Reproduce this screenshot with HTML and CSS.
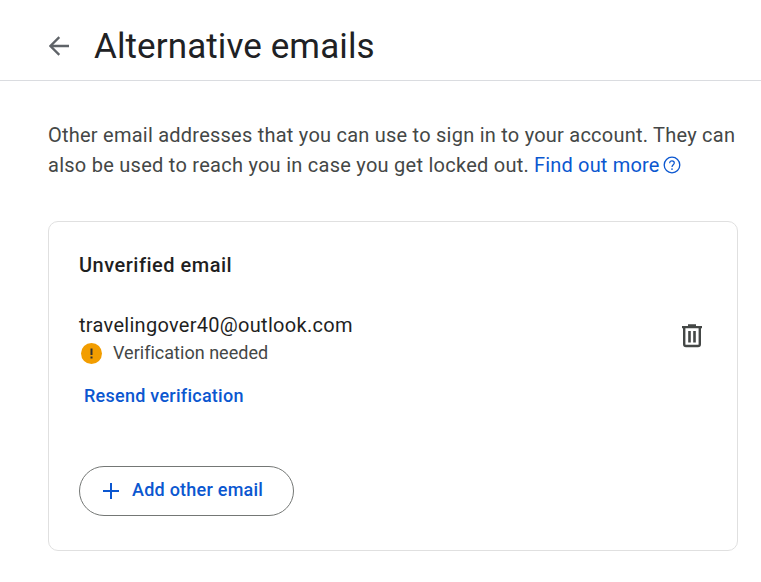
FILE: index.html
```html
<!DOCTYPE html>
<html lang="en-GB">
<head>
<meta charset="utf-8">
<title>Alternative emails</title>
<link rel="stylesheet" href="styles.css">
</head>
<body>
<header class="header">
  <svg class="back" viewBox="0 0 20 20"><path d="M20 10H1.8M10.3 1.1L1.4 10l8.900 8.900" fill="none" stroke="currentColor" stroke-width="2.300"/></svg>
  <h1 class="title">Alternative emails</h1>
</header>
<main class="main">
  <p class="intro"><span class="line line-first">Other email addresses that you can use to sign in to your account. They can</span><br><span class="line line-second">also be used to reach you in case you get locked out.</span> <a class="more"><span class="more-text">Find out more</span><svg class="help" viewBox="0 0 18 18"><circle cx="9" cy="9" r="7.800" fill="none" stroke="currentColor" stroke-width="1.300"/><path d="M6.700 7.200C6.700 5.700 7.600 4.800 9 4.800s2.300.9 2.300 2.200C11.300 8.700 9 8.900 9 11" fill="none" stroke="currentColor" stroke-width="1.200"/><circle cx="9" cy="13.100" r=".85" fill="currentColor"/></svg></a></p>
  <section class="card">
    <h2 class="card-title">Unverified email</h2>
    <div class="row">
      <div class="details">
        <div class="address">travelingover40@outlook.com</div>
        <div class="status">
          <svg class="warning" viewBox="0 0 21 21"><circle cx="10.500" cy="10.500" r="10.500" fill="#f29d00"/><path d="M9.500 5.500h2v6.500h-2zM9.500 13.500h2v2h-2z" fill="#303030"/></svg>
          <span class="status-text">Verification needed</span>
        </div>
        <a class="resend">Resend verification</a>
      </div>
      <svg class="trash" viewBox="0 0 20 24"><path d="M0 2h6V.3h8V2h6v2.300H0z" fill="currentColor"/><path d="M2.200 4v16.200q0 1.800 1.800 1.800h12q1.800 0 1.800-1.800V4" fill="none" stroke="currentColor" stroke-width="2.400"/><path d="M7.500 7v11.500M12.500 7v11.500" stroke="currentColor" stroke-width="2.600"/></svg>
    </div>
    <button class="add"><svg class="plus" viewBox="0 0 16 16"><path d="M8 0v16M0 8h16" stroke="currentColor" stroke-width="2"/></svg><span class="add-text">Add other email</span></button>
  </section>
</main>
</body>
</html>
```
FILE: styles.css
```css
* { box-sizing: border-box; }
body { margin: 0; background: #fff; color: #1f1f1f; font-family: Roboto, "Liberation Sans", sans-serif; font-size: 20px; }
h1, h2, p { margin: 0; font-weight: 400; }
.header { display: flex; align-items: center; height: 81px; padding: 12px 0 0 49px; border-bottom: 1px solid #dadce0; }
.back { width: 20px; height: 20px; color: #5f6368; margin-right: 25px; }
.title { padding-top: 2px; font-size: 35px; line-height: 44px; letter-spacing: .1px; color: #202124; white-space: nowrap; }
.main { padding: 39px 23px 0 48px; }
.intro { line-height: 30px; color: #444746; white-space: nowrap; }
.line-first { letter-spacing: .235px; }
.line-second { letter-spacing: .26px; }
.more { color: #0b57d0; }
.more-text { letter-spacing: .17px; }
.help { width: 18px; height: 18px; margin-left: 3px; vertical-align: -2px; }
.card { height: 330px; margin-top: 41px; padding: 28px 35px 0 30px; border: 1px solid #e0e0e0; border-radius: 10px; }
.card-title { font-size: 20px; font-weight: 500; line-height: 30px; letter-spacing: .5px; }
.row { display: flex; justify-content: space-between; margin-top: 30px; }
.address { line-height: 30px; letter-spacing: .29px; }
.status { display: flex; align-items: center; gap: 11px; height: 26px; padding-left: 2px; font-size: 18px; color: #444746; }
.status-text { padding-bottom: 2px; letter-spacing: .02px; }
.warning { width: 21px; height: 21px; }
.resend { display: block; margin: 17px 0 0 5px; line-height: 26px; font-size: 18px; font-weight: 500; letter-spacing: .26px; color: #0b57d0; }
.trash { width: 20px; height: 24px; margin-top: 14px; color: #444746; }
.add { display: flex; align-items: center; gap: 13px; width: 215px; height: 50px; margin-top: 57px; padding: 0 0 0 23px; border: 1px solid #747775; border-radius: 25px; background: #fff; color: #0b57d0; font: 500 18px Roboto, sans-serif; letter-spacing: .24px; white-space: nowrap; }
.add-text { padding-bottom: 3px; }
.plus { width: 16px; height: 16px; }
```
